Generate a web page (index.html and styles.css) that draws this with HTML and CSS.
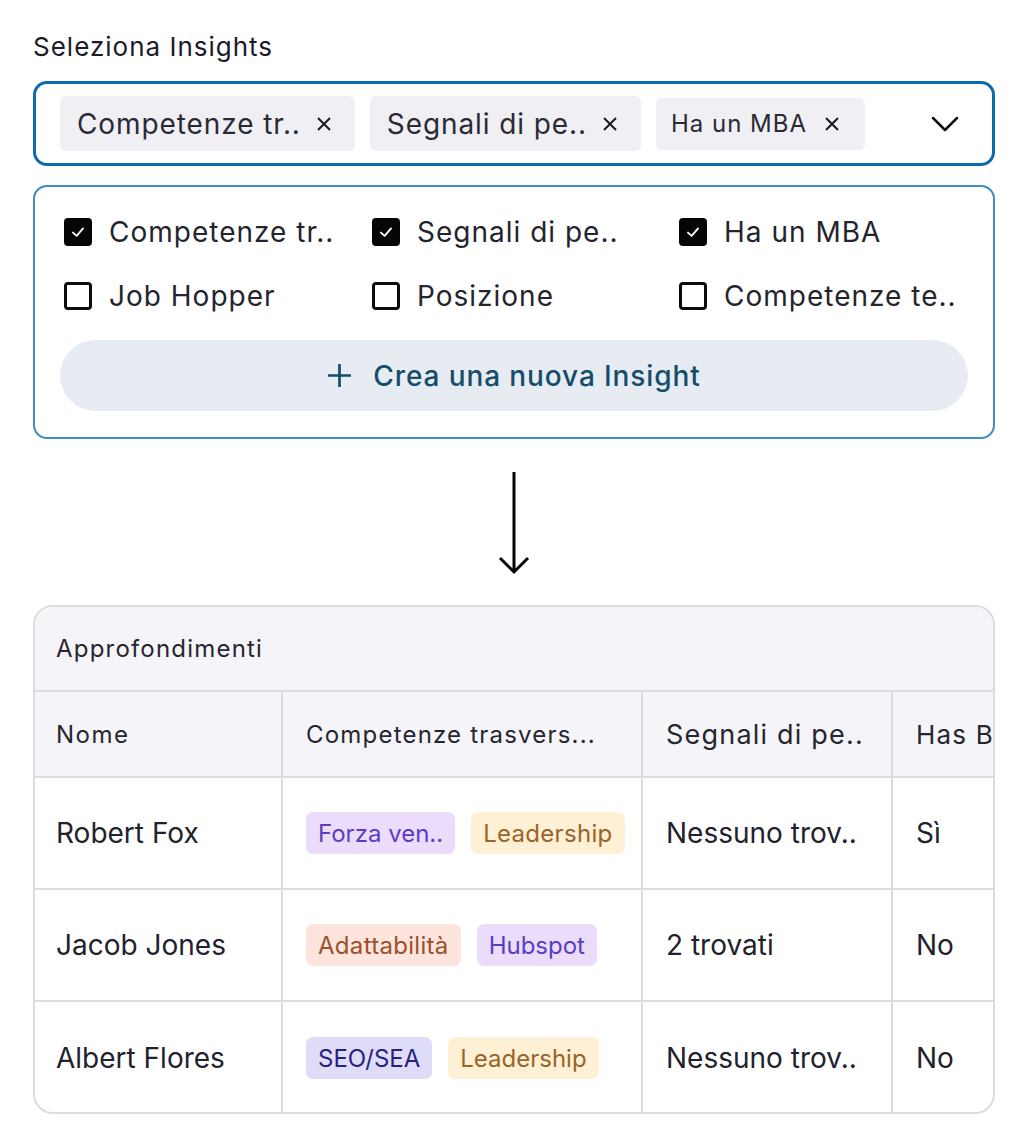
FILE: index.html
```html
<!DOCTYPE html>
<html lang="it">
<head>
<meta charset="utf-8">
<title>Seleziona Insights</title>
<link rel="stylesheet" href="styles.css">
</head>
<body>
<div class="page">
  <div class="label">Seleziona Insights</div>

  <div class="select">
    <div class="chips">
      <span class="chip">Competenze tr..
        <svg class="x" viewBox="0 0 16 16"><path d="M2 2L14 14M14 2L2 14"/></svg>
      </span>
      <span class="chip">Segnali di pe..
        <svg class="x" viewBox="0 0 16 16"><path d="M2 2L14 14M14 2L2 14"/></svg>
      </span>
      <span class="chip chip-sm">Ha un MBA
        <svg class="x" viewBox="0 0 16 16"><path d="M2 2L14 14M14 2L2 14"/></svg>
      </span>
    </div>
    <svg class="chev" viewBox="0 0 28 16"><path d="M2 2L14 14L26 2"/></svg>
  </div>

  <div class="panel">
    <div class="options">
      <label class="opt"><span class="cb on"><svg viewBox="0 0 16 16"><path d="M3.5 8.5L6.8 11.5L12.5 4.8"/></svg></span>Competenze tr..</label>
      <label class="opt"><span class="cb on"><svg viewBox="0 0 16 16"><path d="M3.5 8.5L6.8 11.5L12.5 4.8"/></svg></span>Segnali di pe..</label>
      <label class="opt"><span class="cb on"><svg viewBox="0 0 16 16"><path d="M3.5 8.5L6.8 11.5L12.5 4.8"/></svg></span>Ha un MBA</label>
      <label class="opt"><span class="cb"></span>Job Hopper</label>
      <label class="opt"><span class="cb"></span>Posizione</label>
      <label class="opt"><span class="cb"></span>Competenze te..</label>
    </div>
    <button class="create"><svg class="plus" viewBox="0 0 24 24"><path d="M12 1V23M1 12H23"/></svg>Crea una nuova Insight</button>
  </div>

  <div class="arrow">
    <svg viewBox="0 0 40 104" width="40" height="104"><path d="M20 1V101M6 87L20 101L34 87"/></svg>
  </div>

  <div class="card">
    <div class="card-title">Approfondimenti</div>
    <div class="grid">
      <div class="th first">Nome</div>
      <div class="th">Competenze trasvers...</div>
      <div class="th th-lg">Segnali di pe..</div>
      <div class="th th-md">Has B</div>

      <div class="td first">Robert Fox</div>
      <div class="td tags"><span class="tag purple">Forza ven..</span><span class="tag yellow">Leadership</span></div>
      <div class="td">Nessuno trov..</div>
      <div class="td">Sì</div>

      <div class="td first">Jacob Jones</div>
      <div class="td tags"><span class="tag peach">Adattabilità</span><span class="tag purple">Hubspot</span></div>
      <div class="td">2 trovati</div>
      <div class="td">No</div>

      <div class="td first last">Albert Flores</div>
      <div class="td tags last"><span class="tag indigo">SEO/SEA</span><span class="tag yellow">Leadership</span></div>
      <div class="td last">Nessuno trov..</div>
      <div class="td last">No</div>
    </div>
  </div>
</div>
</body>
</html>
```

FILE: styles.css
```css
* { box-sizing: border-box; }
html, body { margin: 0; padding: 0; background: #ffffff; }
body {
  font-family: Inter, "Noto Sans", "Liberation Sans", sans-serif;
  color: #1f1f2b;
}
.page {
  width: 962px;
  margin-left: 33px;
  padding-top: 31px;
}
.label {
  font-size: 26px;
  line-height: 32px;
  letter-spacing: 1px;
  color: #1b1b27;
  margin-bottom: 18px;
}

/* select */
.select {
  height: 85px;
  border: 3px solid #0d6aae;
  border-radius: 14px;
  display: flex;
  align-items: center;
  padding: 0 33px 0 24px;
}
.chips { display: flex; align-items: center; gap: 15px; flex: 1; }
.chip {
  display: inline-flex;
  align-items: center;
  height: 55px;
  padding: 0 23px 0 17px;
  background: #f0eff4;
  border-radius: 6px;
  font-size: 28px;
  letter-spacing: 0.9px;
  color: #2a2a35;
  gap: 15px;
}
.chip-sm { font-size: 24px; letter-spacing: 1px; height: 52px; padding: 0 25px 0 15px; gap: 17px; }
.x { width: 16px; height: 16px; fill: none; stroke: #1a1a22; stroke-width: 2; flex: none; }
.chev { width: 28px; height: 16px; fill: none; stroke: #111; stroke-width: 2.5; stroke-linecap: round; stroke-linejoin: round; }

/* panel */
.panel {
  margin-top: 19px;
  border: 2px solid #3b8dc2;
  border-radius: 14px;
  padding: 27px 25px 26px;
}
.options {
  display: grid;
  grid-template-columns: 308px 307px 1fr;
  row-gap: 28px;
  margin-left: 4px;
}
.opt {
  display: flex;
  align-items: center;
  gap: 17px;
  font-size: 28px;
  line-height: 36px;
  letter-spacing: 1px;
  color: #24242f;
  white-space: nowrap;
}
.cb {
  width: 28px;
  height: 28px;
  border: 3px solid #0b0b0b;
  border-radius: 4px;
  display: inline-flex;
  align-items: center;
  justify-content: center;
  flex: none;
}
.cb.on { background: #050505; border-color: #050505; }
.cb svg { width: 18px; height: 18px; fill: none; stroke: #fff; stroke-width: 1.6; stroke-linecap: round; stroke-linejoin: round; }
.create {
  margin-top: 26px;
  width: 100%;
  height: 71px;
  border: 0;
  border-radius: 36px;
  background: #e6ecf1;
  color: #164d6b;
  font-family: inherit;
  font-size: 28px;
  font-weight: 500;
  letter-spacing: 0.9px;
  display: flex;
  align-items: center;
  justify-content: center;
  gap: 21px;
  padding: 0;
}
.plus { width: 25px; height: 25px; fill: none; stroke: #164d6b; stroke-width: 2.6; }

/* arrow */
.arrow {
  display: flex;
  justify-content: center;
  margin-top: 32px;
  margin-bottom: 30px;
}
.arrow svg { fill: none; stroke: #050505; stroke-width: 3; stroke-linejoin: miter; }

/* table card */
.card {
  border: 2px solid #dcdce0;
  border-radius: 20px;
  overflow: hidden;
  height: 509px;
}
.card-title {
  height: 85px;
  background: #f5f4f8;
  border-bottom: 2px solid #dcdce0;
  display: flex;
  align-items: center;
  padding-left: 21px;
  font-size: 24px;
  letter-spacing: 1.2px;
  color: #26262f;
}
.grid {
  display: grid;
  grid-template-columns: 248px 360px 250px 250px;
  grid-auto-rows: 112px;
  grid-template-rows: 86px;
}
.th, .td {
  border-right: 2px solid #dcdce0;
  border-bottom: 2px solid #dcdce0;
  display: flex;
  align-items: center;
  padding-left: 23px;
  white-space: nowrap;
  overflow: hidden;
}
.th.first, .td.first { padding-left: 21px; }
.th {
  background: #f5f4f8;
  font-size: 24px;
  letter-spacing: 1.2px;
  color: #26262f;
}
.th.first { letter-spacing: 1.5px; }
.th-lg { font-size: 27px; }
.th-md { font-size: 26px; }
.td { font-size: 28px; color: #22222d; }
.td.last { border-bottom: 0; }
.tags { gap: 16px; }
.tag {
  height: 42px;
  padding: 0 12px;
  border-radius: 7px;
  font-size: 24px;
  display: inline-flex;
  align-items: center;
}
.peach, .tag.purple + .tag { letter-spacing: 0.3px; }
.purple { background: #ecdcfc; color: #5a3ec2; }
.yellow { background: #fdf0d4; color: #9a6428; }
.peach { background: #fde4dc; color: #9c4f2d; }
.indigo { background: #dfdcf8; color: #28227e; }
```
